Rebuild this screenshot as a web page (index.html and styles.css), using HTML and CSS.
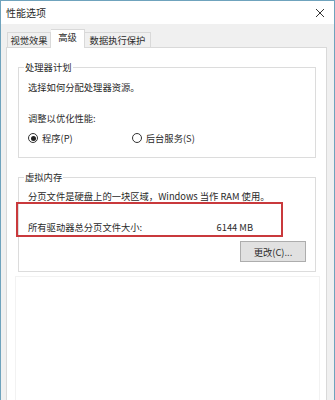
FILE: index.html
```html
<!DOCTYPE html>
<html>
<head>
    <title>性能选项</title>
    <meta charset="utf-8">
    <link rel="stylesheet" href="styles.css">
</head>
<body>
<div class="window">
    <div class="titlebar">
        <span class="title">性能选项</span>
        <svg class="close" width="10" height="10" viewBox="0 0 10 10">
            <path d="M1 1 L9 9 M9 1 L1 9" stroke="#333" stroke-width="1" fill="none"/>
        </svg>
    </div>
    <div class="dialog">
        <div class="tabs">
            <div class="tab t1">视觉效果</div>
            <div class="tab t2 active">高级</div>
            <div class="tab t3">数据执行保护</div>
        </div>
        <div class="panel">
            <fieldset class="group g1">
                <legend>处理器计划</legend>
                <div class="line first">选择如何分配处理器资源。</div>
                <div class="line second">调整以优化性能:</div>
                <div class="radios">
                    <label class="radio"><span class="dot on"></span>程序(P)</label>
                    <label class="radio r2"><span class="dot"></span>后台服务(S)</label>
                </div>
            </fieldset>
            <fieldset class="group g2">
                <legend>虚拟内存</legend>
                <div class="line first">分页文件是硬盘上的一块区域，Windows 当作 RAM 使用。</div>
                <div class="mark">
                    <span>所有驱动器总分页文件大小:</span>
                    <span>6144 MB</span>
                </div>
                <div class="btnrow">
                    <button class="btn">更改(C)...</button>
                </div>
            </fieldset>
            <div class="group g3"></div>
        </div>
    </div>
</div>
</body>
</html>
```

FILE: styles.css
```css
body {
    margin: 0;
    width: 335px;
    height: 400px;
    overflow: hidden;
    font-family: "Noto Sans CJK SC", "Liberation Sans", sans-serif;
    font-size: 9.3px;
    color: #2a2a2a;
}
.window {
    height: 400px;
    border: 1px solid #6fa3bd;
    border-bottom: none;
    box-sizing: border-box;
    background: #f0f0f0;
    display: flex;
    flex-direction: column;
    overflow: hidden;
}
.titlebar {
    flex: none;
    height: 23px;
    background: #fff;
    display: flex;
    align-items: center;
    justify-content: space-between;
    padding: 0 9px 0 5px;
}
.title {
    font-size: 10px;
    line-height: 12px;
}
.close {
    display: block;
}
.dialog {
    flex: 1;
    min-height: 0;
    display: flex;
    flex-direction: column;
}
.tabs {
    flex: none;
    height: 23px;
    display: flex;
    align-items: flex-end;
    padding-left: 6px;
}
.tab {
    box-sizing: border-box;
    height: 15px;
    line-height: 14px;
    text-align: center;
    border: 1px solid #d9d9d9;
    border-bottom: none;
    background: #f0f0f0;
}
.t1 { width: 44px; }
.t2 { width: 34px; }
.t3 { width: 66px; border-left: none; }
.tab.active {
    height: 19px;
    line-height: 15px;
    background: #fff;
    margin-bottom: -1px;
    position: relative;
    border-left: none;
}
.panel {
    flex: 1;
    min-height: 0;
    overflow: hidden;
    margin: 0 7px 0 5px;
    background: #fff;
    border: 1px solid #d9d9d9;
    border-bottom: none;
    padding-top: 13px;
}
.group {
    margin: 0 10px 0 11px;
    padding: 0 9px;
    border: 1px solid #dcdcdc;
    min-width: 0;
}
.group legend {
    padding: 0 1px;
    margin-left: -4px;
    line-height: 12px;
}
.line {
    line-height: 12px;
}
.g1 .first { margin-top: 8px; }
.g1 .second { margin-top: 19px; }
.g1 { padding-bottom: 13px; }
.radios {
    margin-top: 8px;
    display: flex;
    line-height: 12px;
}
.radio {
    display: flex;
    align-items: center;
}
.r2 { margin-left: 59px; }
.dot {
    box-sizing: border-box;
    width: 10px;
    height: 10px;
    border: 1px solid #333;
    border-radius: 50%;
    margin: 0 4px 0 0;
    display: flex;
    align-items: center;
    justify-content: center;
}
.dot.on::after {
    content: "";
    width: 5px;
    height: 5px;
    border-radius: 50%;
    background: #222;
}
.g2 { margin-top: 13px; padding-bottom: 9px; }
.g2 .first { margin-top: 7px; }
.mark {
    margin-left: -12px;
    width: 267px;
    box-sizing: border-box;
    height: 35px;
    border: 2px solid #c9393c;
    padding: 17px 28px 0 10px;
    line-height: 12px;
    display: flex;
    justify-content: space-between;
}
.btnrow {
    display: flex;
    justify-content: flex-end;
    margin-top: 4px;
}
.btn {
    width: 66px;
    height: 21px;
    border: 1px solid #adadad;
    background: #e1e1e1;
    font-family: inherit;
    font-size: 9.3px;
    color: #2a2a2a;
    padding: 0;
}
.g3 {
    margin: 4px 6px 0 8px;
    height: 200px;
    border-color: #f2f2f2;
    border-bottom: none;
}
```
